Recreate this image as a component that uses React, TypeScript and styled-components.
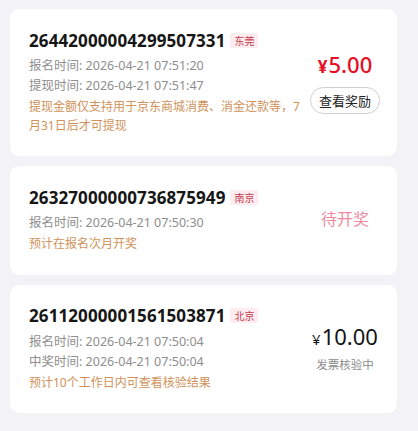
import styled, { createGlobalStyle } from "styled-components";

const GlobalStyle = createGlobalStyle`
    body {
        margin: 0;
        background: #f3f3f7;
        font-family: "Noto Sans", "Noto Sans CJK SC", sans-serif;
    }
`;

interface Record {
    id: string;
    city: string;
    lines: string[];
    notes: string[];
    status: "reward" | "pending" | "checking";
    amount?: string;
}

const records: Record[] = [
    {
        id: "26442000004299507331",
        city: "东莞",
        lines: ["报名时间: 2026-04-21 07:51:20", "提现时间: 2026-04-21 07:51:47"],
        notes: ["提现金额仅支持用于京东商城消费、消金还款等，7月31日后才可提现"],
        status: "reward",
        amount: "5.00",
    },
    {
        id: "26327000000736875949",
        city: "南京",
        lines: ["报名时间: 2026-04-21 07:50:30"],
        notes: ["预计在报名次月开奖"],
        status: "pending",
    },
    {
        id: "26112000001561503871",
        city: "北京",
        lines: ["报名时间: 2026-04-21 07:50:04", "中奖时间: 2026-04-21 07:50:04"],
        notes: ["预计10个工作日内可查看核验结果"],
        status: "checking",
        amount: "10.00",
    },
];

function RecordCard({ item }: { item: Record }) {
    return (
        <Card>
            <Info>
                <TitleRow>
                    <Code>{item.id}</Code>
                    <CityTag>{item.city}</CityTag>
                </TitleRow>
                {item.lines.map(line => <Meta key={line}>{line}</Meta>)}
                {item.notes.map(note => <Note key={note}>{note}</Note>)}
            </Info>

            <Side>
                {item.status === "reward" && (<>
                    <Price $tone="red"><small>¥</small>{item.amount}</Price>
                    <RewardButton>查看奖励</RewardButton>
                </>)}
                {item.status === "pending" && <Pending>待开奖</Pending>}
                {item.status === "checking" && (<>
                    <Price $tone="dark"><small>¥</small>{item.amount}</Price>
                    <StatusText>发票核验中</StatusText>
                </>)}
            </Side>
        </Card>
    );
}

function App() {
    return (
        <>
            <GlobalStyle />
            <List>
                {records.map(r => <RecordCard key={r.id} item={r} />)}
            </List>
        </>
    );
}

export default App;

const List = styled.div`
    display: flex;
    flex-direction: column;
    gap: 10px;
    padding: 9px 21px 0 10px;
`;

const Card = styled.div`
    display: flex;
    align-items: center;
    gap: 4px;
    background: #fff;
    border-radius: 9px;
    padding: 19px 16px 21px 19px;
`;

const Info = styled.div`
    flex: 1;
    min-width: 0;
    display: flex;
    flex-direction: column;
`;

const TitleRow = styled.div`
    display: flex;
    align-items: center;
    gap: 5px;
    height: 24px;
    margin-bottom: 4px;
`;

const Code = styled.span`
    font-size: 17px;
    font-weight: 700;
    color: #161616;
    letter-spacing: 0.1px;
`;

const CityTag = styled.span`
    font-family: "Noto Sans CJK SC", sans-serif;
    font-size: 10px;
    line-height: 15px;
    padding: 0 4px;
    border-radius: 2px;
    background: #fdedf0;
    color: #c63a4e;
`;

const Meta = styled.div`
    font-size: 12.5px;
    line-height: 20px;
    color: #8e8e8e;
`;

const Note = styled.div`
    font-size: 12px;
    line-height: 18.5px;
    color: #d0925a;

    ${Meta} + & {
        margin-top: 2px;
    }
`;

const Side = styled.div`
    width: 72px;
    flex-shrink: 0;
    display: flex;
    flex-direction: column;
    align-items: center;
`;

const Price = styled.div<{ $tone: "red" | "dark" }>`
    font-size: 22px;
    line-height: 28px;
    font-weight: ${p => (p.$tone === "red" ? 500 : 400)};
    color: ${p => (p.$tone === "red" ? "#e60f26" : "#141414")};
    white-space: nowrap;

    small {
        font-size: ${p => (p.$tone === "red" ? "17px" : "15px")};
        font-weight: ${p => (p.$tone === "red" ? 700 : 400)};
        margin-right: 1px;
    }
`;

const RewardButton = styled.button`
    margin-top: 6px;
    width: 70px;
    height: 27px;
    padding: 0;
    border: 1px solid #cfcfcf;
    border-radius: 14px;
    background: #fff;
    font-family: "Noto Sans CJK SC", sans-serif;
    font-size: 13px;
    color: #222;
`;

const Pending = styled.div`
    font-size: 16px;
    line-height: 22px;
    color: #ee8ba0;
`;

const StatusText = styled.div`
    margin-top: 4px;
    font-size: 11.5px;
    line-height: 16px;
    color: #8b8b8b;
    white-space: nowrap;
`;
